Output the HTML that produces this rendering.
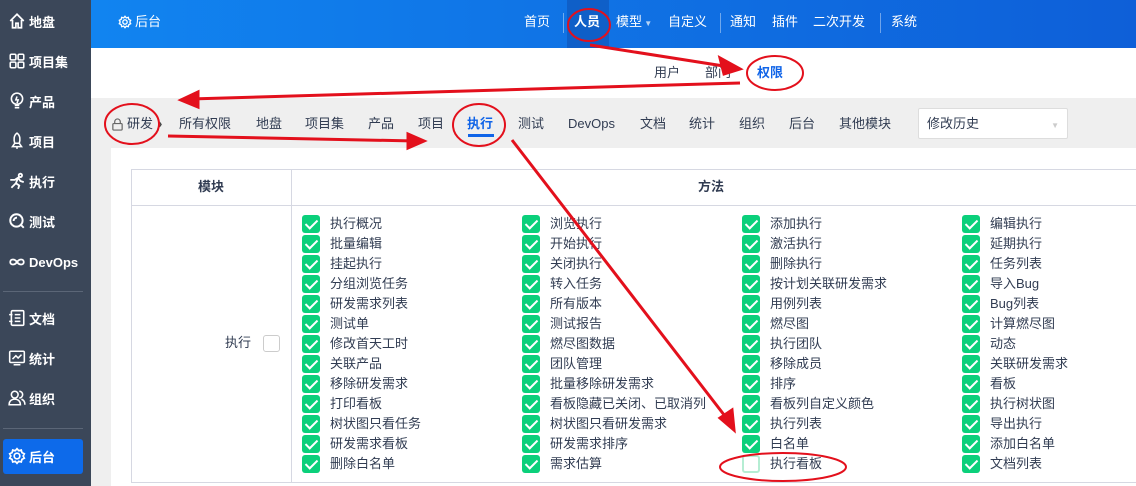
<!DOCTYPE html>
<html><head><meta charset="utf-8"><style>
*{margin:0;padding:0;box-sizing:border-box}
body{width:1136px;height:486px;overflow:hidden;position:relative;background:#efefef;font-family:"Liberation Sans","Noto Sans CJK SC",sans-serif;font-size:13px;color:#313c52}
.a{position:absolute;white-space:nowrap}
#side{left:0;top:0;width:91px;height:486px;background:#3b4759}
.si{position:absolute;left:8px;color:#fff;font-size:13px;font-weight:bold;display:flex;align-items:center;gap:3px;height:20px}
.si svg{width:18px;height:18px}
#hdr{left:91px;top:0;width:1045px;height:48px;background:linear-gradient(90deg,#1184f0,#0e5fd8)}
.nv{top:12px;color:#fff;font-size:13px;line-height:20px}
.sep{top:13px;width:1px;height:20px;background:rgba(255,255,255,.4)}
#white{left:91px;top:48px;width:1045px;height:50px;background:#fff}
.tb{top:114px;font-size:13px;color:#313c52;line-height:20px}
#card{left:111px;top:148px;width:1025px;height:338px;background:#fff}
.cb{position:absolute;width:18px;height:18px;border-radius:3px;background:#0bd07b}
.cb:after{content:"";position:absolute;left:6px;top:2px;width:5px;height:10px;border:solid #fff;border-width:0 2.5px 2.5px 0;transform:rotate(45deg)}
.u{background:#fff;border:2px solid #b5edd3}
.u:after{display:none}
.lb{position:absolute;font-size:13px;color:#313c52;line-height:18px}
</style></head><body>
<div id="side" class="a">
<div class="si" style="top:11px"><svg viewBox="0 0 16 16" fill="none" stroke="#fff" stroke-width="1.5"><path d="M2 8 8 2l6 6M4 7v7h3v-4h2v4h3V7"/></svg>地盘</div>
<div class="si" style="top:51px"><svg viewBox="0 0 16 16" fill="none" stroke="#fff" stroke-width="1.4"><rect x="2" y="2" width="5" height="5" rx="1"/><rect x="9" y="2" width="5" height="5" rx="1"/><rect x="2" y="9" width="5" height="5" rx="1"/><rect x="9" y="9" width="5" height="5" rx="1"/></svg>项目集</div>
<div class="si" style="top:91px"><svg viewBox="0 0 16 16" fill="none" stroke="#fff" stroke-width="1.4"><circle cx="8" cy="6" r="5"/><path d="M6 12h4M6 14h4M8 4 7 7h2l-1 3"/></svg>产品</div>
<div class="si" style="top:131px"><svg viewBox="0 0 16 16" fill="none" stroke="#fff" stroke-width="1.4"><path d="M8 1c3 2 3 6 2 9H6C5 7 5 3 8 1zM6 10l-2 3h8l-2-3M8 13v2"/></svg>项目</div>
<div class="si" style="top:171px"><svg viewBox="0 0 16 16" fill="none" stroke="#fff" stroke-width="1.6"><circle cx="11" cy="3" r="1.5"/><path d="M2 7h4l3-2 2 3 3 1M9 5 7 10l3 2-1 3M7 10l-4 4"/></svg>执行</div>
<div class="si" style="top:211px"><svg viewBox="0 0 16 16" fill="none" stroke="#fff" stroke-width="1.7"><circle cx="7.5" cy="7.5" r="5.5"/><path d="M11 11l3 3M5 8a3 3 0 0 1 3-3"/></svg>测试</div>
<div class="si" style="top:252px"><svg viewBox="0 0 16 16" fill="none" stroke="#fff" stroke-width="1.6"><path d="M8 8c-2-3-6-3-6 0s4 3 6 0 6-3 6 0-4 3-6 0z"/></svg>DevOps</div>
<div class="a" style="left:3px;top:291px;width:80px;height:1px;background:#5b6677"></div>
<div class="si" style="top:308px"><svg viewBox="0 0 16 16" fill="none" stroke="#fff" stroke-width="1.4"><rect x="3" y="1.5" width="11" height="13" rx="1"/><path d="M1 5h3M1 11h3M6 5h5M6 8h5M6 11h5"/></svg>文档</div>
<div class="si" style="top:348px"><svg viewBox="0 0 16 16" fill="none" stroke="#fff" stroke-width="1.4"><rect x="1.5" y="2" width="13" height="10" rx="1"/><path d="M4 9l3-3 2 2 3-3M5 14h6"/></svg>统计</div>
<div class="si" style="top:388px"><svg viewBox="0 0 16 16" fill="none" stroke="#fff" stroke-width="1.4"><circle cx="6" cy="5" r="3"/><path d="M1 14c0-4 3-5 5-5s5 1 5 5zM10 2a3 3 0 0 1 0 6M12 9c2 1 3 2 3 5"/></svg>组织</div>
<div class="a" style="left:3px;top:428px;width:80px;height:1px;background:#5b6677"></div>
<div class="a" style="left:3px;top:439px;width:80px;height:35px;background:#0d6aea;border-radius:3px"></div>
<div class="si" style="top:446px"><svg viewBox="0 0 16 16" fill="none" stroke="#fff" stroke-width="1.5"><circle cx="8" cy="8" r="2.5"/><path d="M8 1.5l1.5 1.8 2.3-.6.6 2.3L14.5 6l-1 2 1 2-2.1 1 -.6 2.3-2.3-.6L8 14.5l-1.5-1.8-2.3.6-.6-2.3L1.5 10l1-2-1-2 2.1-1 .6-2.3 2.3.6z"/></svg>后台</div>
</div>
<div id="hdr" class="a">
<div class="a" style="left:27px;top:12px;color:#fff;font-size:13px;line-height:20px;display:flex;align-items:center;gap:3px"><svg width="14" height="14" viewBox="0 0 16 16" fill="none" stroke="#fff" stroke-width="1.5"><circle cx="8" cy="8" r="2.5"/><path d="M8 1.5l1.5 1.8 2.3-.6.6 2.3L14.5 6l-1 2 1 2-2.1 1 -.6 2.3-2.3-.6L8 14.5l-1.5-1.8-2.3.6-.6-2.3L1.5 10l1-2-1-2 2.1-1 .6-2.3 2.3.6z"/></svg>后台</div>
<div class="a" style="left:476px;top:0;width:42px;height:48px;background:#0f5fc8"></div>
<div class="a nv" style="left:433px">首页</div>
<div class="a sep" style="left:472px"></div>
<div class="a nv" style="left:483px;font-weight:bold">人员</div>
<div class="a nv" style="left:525px">模型<span style="font-size:8px;opacity:.7"> ▼</span></div>
<div class="a nv" style="left:577px">自定义</div>
<div class="a sep" style="left:629px"></div>
<div class="a nv" style="left:639px">通知</div>
<div class="a nv" style="left:681px">插件</div>
<div class="a nv" style="left:722px">二次开发</div>
<div class="a sep" style="left:789px"></div>
<div class="a nv" style="left:800px">系统</div>
</div>
<div id="white" class="a">
<div class="a" style="left:563px;top:15px;line-height:20px">用户</div>
<div class="a" style="left:614px;top:15px;line-height:20px">部门</div>
<div class="a" style="left:666px;top:15px;line-height:20px;color:#1064e8;font-weight:bold">权限</div>
</div>
<div class="a tb" style="left:111px;display:flex;align-items:center;gap:3px"><svg width="13" height="13" viewBox="0 0 14 14" fill="none" stroke="#666" stroke-width="1.3"><rect x="2" y="6" width="10" height="7" rx="1"/><path d="M4 6V4a3 3 0 0 1 6 0v2"/></svg>研发 <b style="color:#444;margin-left:2px">›</b></div>
<div class="a tb" style="left:179px">所有权限</div>
<div class="a tb" style="left:256px">地盘</div>
<div class="a tb" style="left:305px">项目集</div>
<div class="a tb" style="left:368px">产品</div>
<div class="a tb" style="left:418px">项目</div>
<div class="a tb" style="left:467px;color:#1064e8;font-weight:bold">执行</div>
<div class="a" style="left:468px;top:134px;width:26px;height:3px;background:#1064e8"></div>
<div class="a tb" style="left:518px">测试</div>
<div class="a tb" style="left:568px">DevOps</div>
<div class="a tb" style="left:640px">文档</div>
<div class="a tb" style="left:689px">统计</div>
<div class="a tb" style="left:739px">组织</div>
<div class="a tb" style="left:789px">后台</div>
<div class="a tb" style="left:839px">其他模块</div>
<div class="a" style="left:918px;top:108px;width:150px;height:31px;background:#fff;border:1px solid #ddd;border-radius:2px;padding:6px 8px;font-size:13px;line-height:18px">修改历史<span style="position:absolute;right:8px;top:8px;color:#ccc;font-size:8px">▼</span></div>
<div id="card" class="a"></div>
<div class="a" style="left:131px;top:169px;width:1010px;height:314px;border:1px solid #d6d8e2"></div>
<div class="a" style="left:131px;top:205px;width:1010px;height:1px;background:#d6d8e2"></div>
<div class="a" style="left:291px;top:169px;width:1px;height:314px;background:#d6d8e2"></div>
<div class="a" style="left:198px;top:177px;font-weight:bold;line-height:20px">模块</div>
<div class="a" style="left:698px;top:177px;font-weight:bold;line-height:20px">方法</div>
<div class="a" style="left:225px;top:334px;line-height:18px">执行</div>
<div class="a" style="left:263px;top:335px;width:17px;height:17px;border:1.5px solid #ccc;border-radius:3px;background:#fff"></div>
<div id="grid"></div>
<script>
var cols=[[302,"执行概况,批量编辑,挂起执行,分组浏览任务,研发需求列表,测试单,修改首天工时,关联产品,移除研发需求,打印看板,树状图只看任务,研发需求看板,删除白名单"],[522,"浏览执行,开始执行,关闭执行,转入任务,所有版本,测试报告,燃尽图数据,团队管理,批量移除研发需求,看板隐藏已关闭、已取消列,树状图只看研发需求,研发需求排序,需求估算"],[742,"添加执行,激活执行,删除执行,按计划关联研发需求,用例列表,燃尽图,执行团队,移除成员,排序,看板列自定义颜色,执行列表,白名单,执行看板"],[962,"编辑执行,延期执行,任务列表,导入Bug,Bug列表,计算燃尽图,动态,关联研发需求,看板,执行树状图,导出执行,添加白名单,文档列表"]];
var h="";cols.forEach(function(c){c[1].split(",").forEach(function(t,i){var y=215+i*20;var un=(t=="执行看板");h+='<div class="cb'+(un?' u':'')+'" style="left:'+c[0]+'px;top:'+y+'px"></div><div class="lb" style="left:'+(c[0]+28)+'px;top:'+y+'px">'+t+'</div>';});});
document.getElementById("grid").innerHTML=h;
</script>
<svg class="a" style="left:0;top:0" width="1136" height="486" fill="none" stroke="#e3101c" stroke-width="3">
<ellipse cx="589" cy="25" rx="21" ry="16" stroke-width="2"/>
<ellipse cx="775" cy="73" rx="28" ry="17" stroke-width="2"/>
<ellipse cx="132" cy="124" rx="27" ry="20" stroke-width="2"/>
<ellipse cx="479" cy="125" rx="26" ry="21" stroke-width="2"/>
<ellipse cx="783" cy="467" rx="63" ry="14" stroke-width="2"/>
<path d="M590 45 L730 67"/><path d="M740 69 L720 58 L724 74z" fill="#e3101c"/>
<path d="M740 83 L190 99"/><path d="M181 100 L198 92 L198 107z" fill="#e3101c"/>
<path d="M168 136 L415 141"/><path d="M424 141 L408 134 L408 148z" fill="#e3101c"/>
<path d="M512 140 L728 420"/><path d="M734 430 L720 418 L732 410z" fill="#e3101c"/>
</svg>
</body></html>
